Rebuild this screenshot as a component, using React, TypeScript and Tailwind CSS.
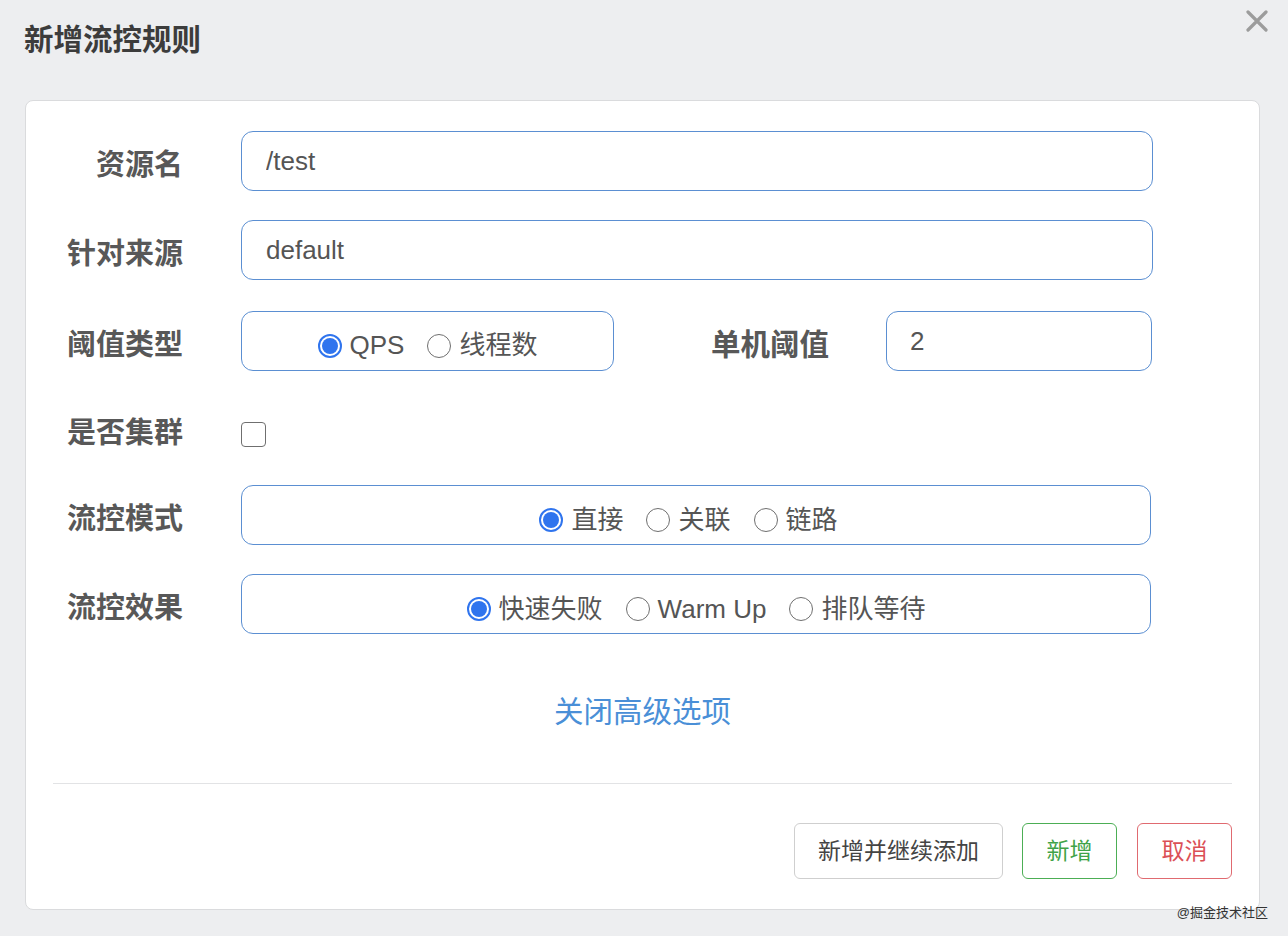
import React, { useState } from 'react';

const FONT = { fontFamily: '"Liberation Sans", "Noto Sans CJK SC", sans-serif' };

interface RadioProps {
    checked: boolean;
    label: string;
    onClick: () => void;
    last?: boolean;
}

const Radio: React.FC<RadioProps> = ({ checked, label, onClick, last }) => (
    <label onClick={onClick} className={`flex items-center cursor-pointer ${last ? '' : 'mr-[23px]'}`}>
        {checked ? (
            <span className="w-[24px] h-[24px] rounded-full border-[2px] border-[#2f74ee] flex items-center justify-center">
                <span className="w-[16px] h-[16px] rounded-full bg-[#2f74ee]" />
            </span>
        ) : (
            <span className="w-[24px] h-[24px] rounded-full border border-[#6f6f6f] bg-white" />
        )}
        <span className="ml-[8px] text-[26px] text-[#555]">{label}</span>
    </label>
);

const Row: React.FC<{ label: string; className?: string; flat?: boolean; children: React.ReactNode }> = ({ label, className, flat, children }) => (
    <div className={`flex items-center h-[60px] ${className ?? ''}`}>
        <div className={`w-[130px] ${flat ? '' : 'pt-[9px]'} text-right text-[29px] font-bold text-[#585858] shrink-0 whitespace-nowrap`}>{label}</div>
        <div className="ml-[58px] flex items-center h-full">{children}</div>
    </div>
);

const boxCls = 'h-[60px] rounded-[12px] border-[1.5px] border-[#5b8fd2] bg-white';

export default function App() {
    const [grade, setGrade] = useState(0);
    const [strategy, setStrategy] = useState(0);
    const [behavior, setBehavior] = useState(0);
    const [cluster, setCluster] = useState(false);

    return (
        <div style={FONT} className="relative w-[1288px] h-[936px] bg-[#edeef0] overflow-hidden">
            <div className="flex items-start justify-between h-[100px]">
                <h1 className="ml-[24px] mt-[21px] text-[29.5px] leading-[38px] font-bold text-[#3c3c3c]">新增流控规则</h1>
                <button className="mr-[20px] mt-[4px]">
                    <svg width="22" height="22" viewBox="0 0 22 22" className="mt-[6px]">
                        <path d="M2 2 L20 20 M20 2 L2 20" stroke="#9c9c9c" strokeWidth="3.2" strokeLinecap="round" />
                    </svg>
                </button>
            </div>

            <div className="ml-[25px] w-[1235px] h-[810px] bg-white rounded-[8px] border border-[#dadbdd] px-[27px] pt-[30px]">
                <Row label="资源名">
                    <input
                        defaultValue="/test"
                        className={`${boxCls} w-[912px] pl-[24px] text-[26px] text-[#555] outline-none`}
                    />
                </Row>
                <Row label="针对来源" className="mt-[29px]">
                    <input
                        defaultValue="default"
                        className={`${boxCls} w-[912px] pl-[24px] text-[26px] text-[#555] outline-none`}
                    />
                </Row>
                <Row label="阈值类型" className="mt-[31px]">
                    <div className={`${boxCls} w-[373px] flex items-center justify-center pt-[9px]`}>
                        <Radio checked={grade === 0} label="QPS" onClick={() => setGrade(0)} />
                        <Radio checked={grade === 1} label="线程数" onClick={() => setGrade(1)} last />
                    </div>
                    <div className="ml-[97px] pt-[9px] text-[29.5px] font-bold text-[#585858] whitespace-nowrap">单机阈值</div>
                    <input
                        defaultValue="2"
                        className={`${boxCls} ml-[57px] w-[266px] pl-[23px] text-[26px] text-[#555] outline-none`}
                    />
                </Row>
                <Row label="是否集群" className="mt-[33px]" flat>
                    <span
                        onClick={() => setCluster(!cluster)}
                        className="w-[25px] h-[25px] rounded-[4px] border-[1.5px] border-[#6f6f6f] bg-white flex items-center justify-center cursor-pointer"
                    >
                        {cluster && (
                            <svg width="16" height="16" viewBox="0 0 16 16">
                                <path d="M3 8 L7 12 L13 4" stroke="#2f74ee" strokeWidth="2.4" fill="none" />
                            </svg>
                        )}
                    </span>
                </Row>
                <Row label="流控模式" className="mt-[21px]">
                    <div className={`${boxCls} w-[910px] flex items-center justify-center pr-[15px] pt-[10px]`}>
                        <Radio checked={strategy === 0} label="直接" onClick={() => setStrategy(0)} />
                        <Radio checked={strategy === 1} label="关联" onClick={() => setStrategy(1)} />
                        <Radio checked={strategy === 2} label="链路" onClick={() => setStrategy(2)} last />
                    </div>
                </Row>
                <Row label="流控效果" className="mt-[29px]">
                    <div className={`${boxCls} w-[910px] flex items-center justify-center pt-[10px]`}>
                        <Radio checked={behavior === 0} label="快速失败" onClick={() => setBehavior(0)} />
                        <Radio checked={behavior === 1} label="Warm Up" onClick={() => setBehavior(1)} />
                        <Radio checked={behavior === 2} label="排队等待" onClick={() => setBehavior(2)} last />
                    </div>
                </Row>

                <div className="mt-[61px] h-[34px] flex justify-center">
                    <a className="text-[29.5px] leading-[34px] text-[#4a8fd7] cursor-pointer">关闭高级选项</a>
                </div>

                <div className="mt-[54px] border-t border-[#e2e3e5]" />

                <div className="mt-[39px] flex justify-end gap-[19px]">
                    <button className="w-[209px] h-[56px] rounded-[6px] border border-[#cfcfcf] bg-white text-[23px] text-[#444]">
                        新增并继续添加
                    </button>
                    <button className="w-[95px] h-[56px] rounded-[6px] border-[1.5px] border-[#4cae55] bg-white text-[23px] text-[#3fa348]">
                        新增
                    </button>
                    <button className="ml-[1px] w-[95px] h-[56px] rounded-[6px] border-[1.5px] border-[#e06a70] bg-white text-[23px] text-[#db4f56]">
                        取消
                    </button>
                </div>
            </div>

            <div className="absolute right-[20px] bottom-[16px] text-[13px] leading-[14px] text-[#333]">@掘金技术社区</div>
        </div>
    );
}
